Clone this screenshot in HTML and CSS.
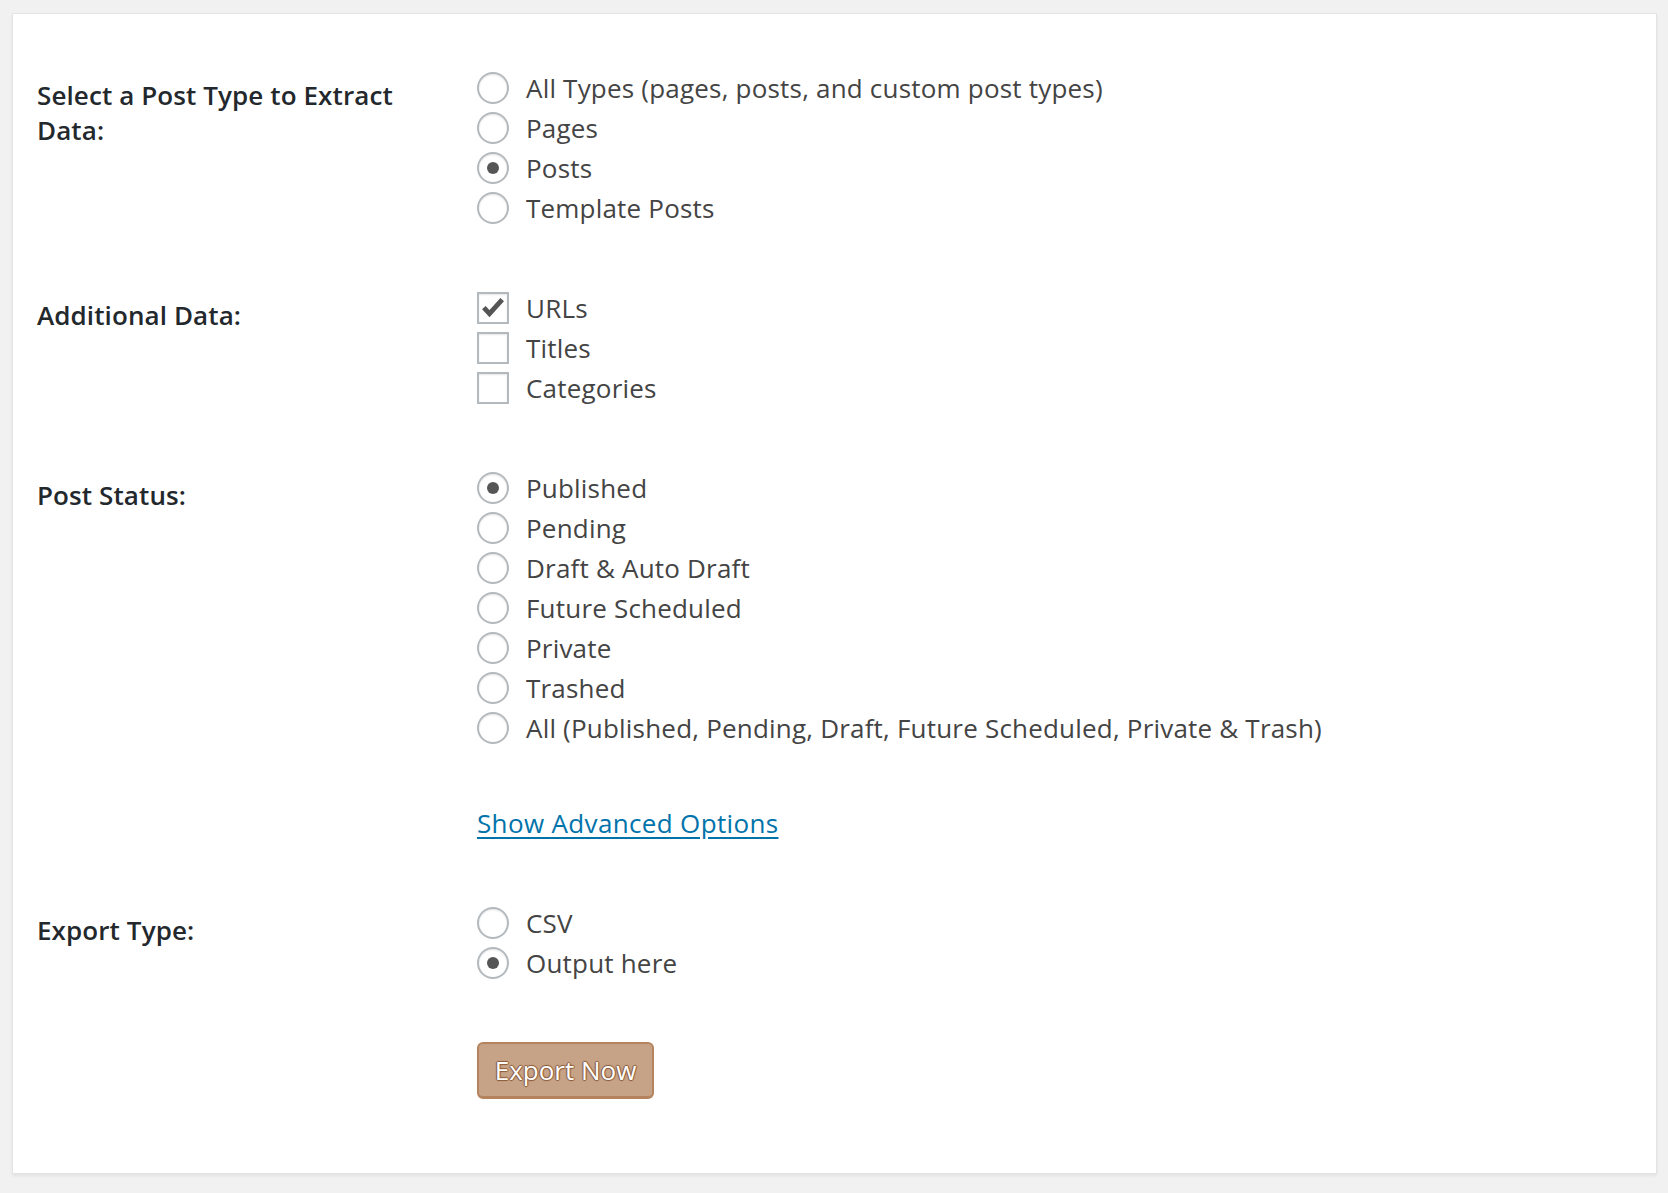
FILE: index.html
```html
<!DOCTYPE html>
<html>
<head>
<meta charset="utf-8">
<link rel="stylesheet" href="styles.css">
</head>
<body>
<div class="card">
  <div class="row row-a">
    <div class="th">Select a Post Type to Extract Data:</div>
    <div class="td">
      <label class="opt"><span class="radio"></span>All Types (pages, posts, and custom post types)</label>
      <label class="opt"><span class="radio"></span>Pages</label>
      <label class="opt"><span class="radio on"></span>Posts</label>
      <label class="opt"><span class="radio"></span>Template Posts</label>
    </div>
  </div>
  <div class="row">
    <div class="th">Additional Data:</div>
    <div class="td">
      <label class="opt"><span class="check"><svg viewBox="0 0 32 32" width="30" height="30"><polyline points="5.5,15.5 12,22.5 26.5,6.5" fill="none" stroke="#555" stroke-width="5.5"/></svg></span>URLs</label>
      <label class="opt"><span class="check"></span>Titles</label>
      <label class="opt"><span class="check"></span>Categories</label>
    </div>
  </div>
  <div class="row">
    <div class="th">Post Status:</div>
    <div class="td">
      <label class="opt"><span class="radio on"></span>Published</label>
      <label class="opt"><span class="radio"></span>Pending</label>
      <label class="opt"><span class="radio"></span>Draft &amp; Auto Draft</label>
      <label class="opt"><span class="radio"></span>Future Scheduled</label>
      <label class="opt"><span class="radio"></span>Private</label>
      <label class="opt"><span class="radio"></span>Trashed</label>
      <label class="opt"><span class="radio"></span>All (Published, Pending, Draft, Future Scheduled, Private &amp; Trash)</label>
    </div>
  </div>
  <div class="row row-link">
    <div class="th"></div>
    <div class="td"><a class="adv" href="#">Show Advanced Options</a></div>
  </div>
  <div class="row">
    <div class="th">Export Type:</div>
    <div class="td">
      <label class="opt"><span class="radio"></span>CSV</label>
      <label class="opt"><span class="radio on"></span>Output here</label>
    </div>
  </div>
  <div class="row row-btn">
    <div class="th"></div>
    <div class="td"><button class="btn">Export Now</button></div>
  </div>
</div>
</body>
</html>
```
FILE: styles.css
```css
html, body {
  margin: 0;
  padding: 0;
  background: #f1f1f1;
}
body {
  font-family: "Open Sans", "Noto Sans", sans-serif;
  font-size: 26px;
  color: #444;
  padding: 13px 11px 19px 12px;
}
.card {
  background: #fff;
  border: 1px solid #e3e3e3;
  box-shadow: 0 2px 3px rgba(0,0,0,0.06);
  padding: 24px 24px 44px 24px;
  height: 1161px;
  box-sizing: border-box;
}
.row {
  display: flex;
}
.th {
  width: 440px;
  flex: none;
  padding-top: 40px;
  font-weight: 600;
  color: #23282d;
  line-height: 35px;
  padding-right: 40px;
  box-sizing: border-box;
  letter-spacing: 0.1px;
}
.td {
  padding: 30px 0;
  display: flex;
  flex-direction: column;
  align-items: flex-start;
}
.opt {
  display: flex;
  align-items: center;
  height: 40px;
  line-height: 40px;
  color: #444;
  white-space: nowrap;
  letter-spacing: 0.2px;
}
.radio, .check {
  width: 32px;
  height: 32px;
  box-sizing: border-box;
  border: 2px solid #b4b9be;
  background: #fff;
  box-shadow: inset 0 1px 2px rgba(0,0,0,0.1);
  margin-right: 17px;
  flex: none;
  display: flex;
  align-items: center;
  justify-content: center;
}
.radio {
  border-radius: 50%;
}
.radio.on::after {
  content: "";
  width: 12px;
  height: 12px;
  border-radius: 50%;
  background: #555;
}
.check svg {
  display: block;
}
.row-link .td {
  padding-bottom: 35px;
}
.adv {
  color: #0073aa;
  text-decoration: underline;
  text-underline-offset: 4px;
  line-height: 30px;
  letter-spacing: 0.35px;
}
.row-btn .td {
  padding-top: 29px;
}
.btn {
  font-family: inherit;
  font-size: 26px;
  width: 177px;
  height: 57px;
  background: #c6a387;
  border: 2px solid #b5835e;
  border-bottom-width: 3px;
  border-radius: 6px;
  color: #fff;
  text-shadow: 0 -1px 1px #8a5a3a, 1px 0 1px #8a5a3a, 0 1px 1px #8a5a3a, -1px 0 1px #8a5a3a;
  padding: 0;
  cursor: pointer;
}
```
